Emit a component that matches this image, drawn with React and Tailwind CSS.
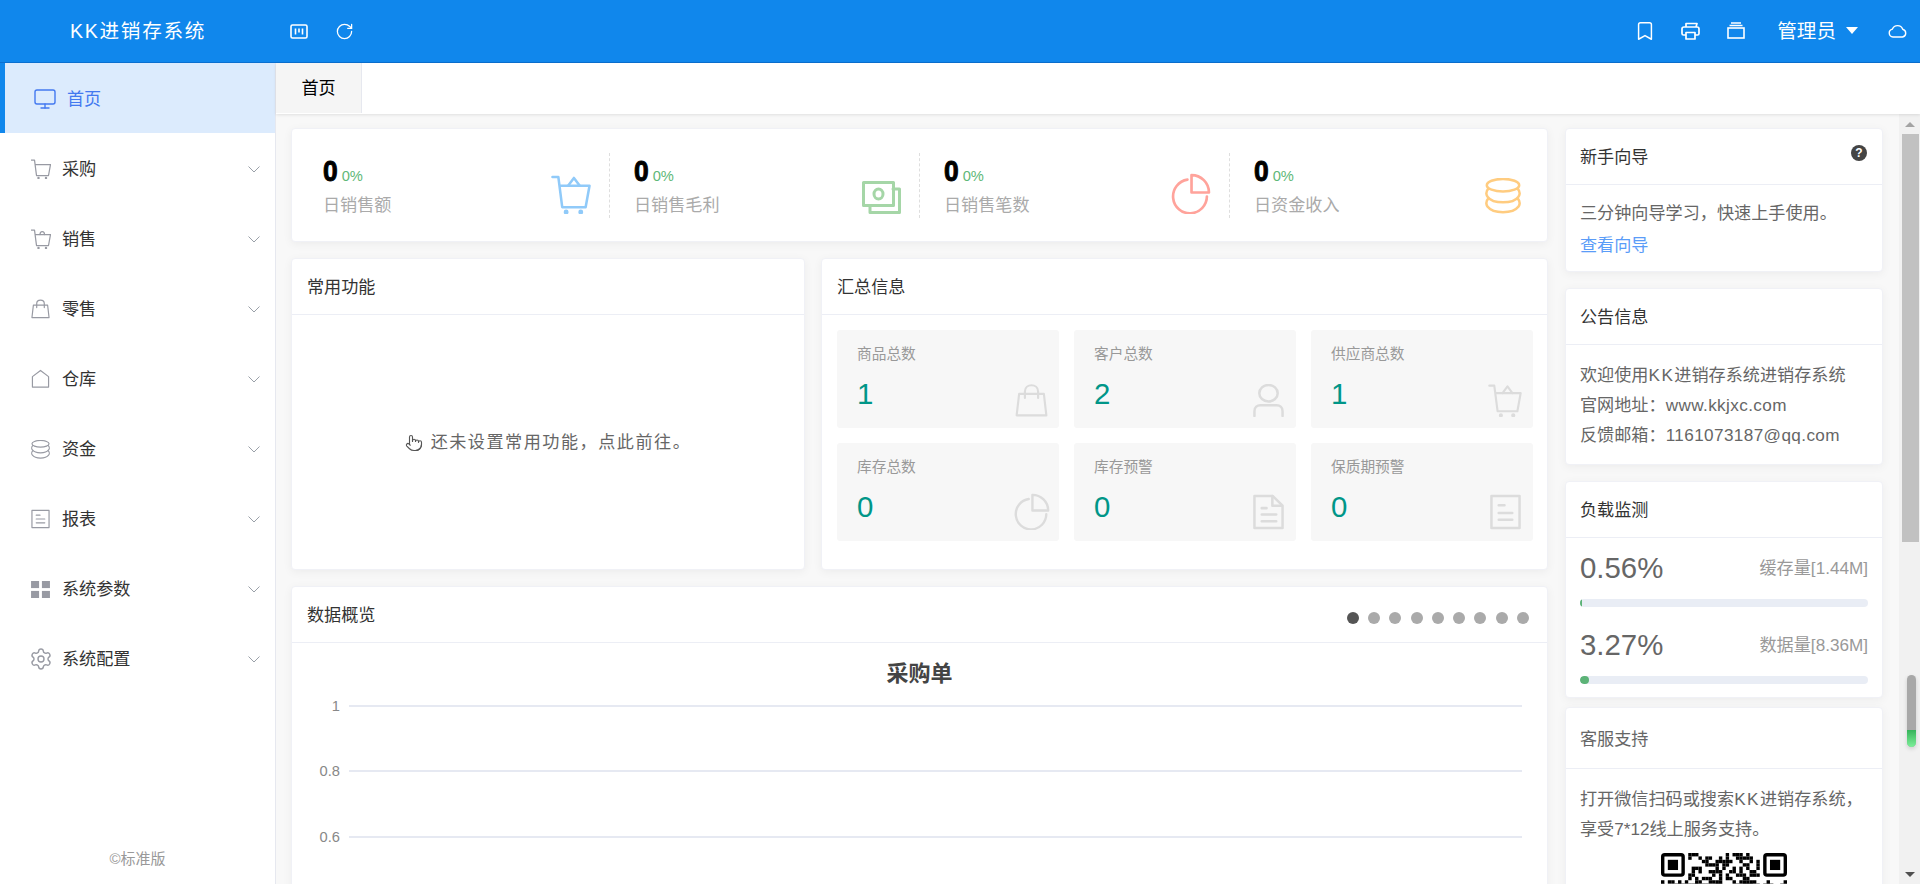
import React from "react";
import { Monitor, Pointer, RotateCw, Bookmark, Settings } from "lucide-react";

const FONT = "[font-family:'Liberation_Sans','Noto_Sans_CJK_SC',sans-serif]";

const S = ({ w = 20, h = 20, vb = "0 0 40 40", sw = 2.5, className = "", children }) => (
  <svg width={w} height={h} viewBox={vb} fill="none" stroke="currentColor" strokeWidth={sw} strokeLinecap="round" strokeLinejoin="round" className={className}>
    {children}
  </svg>
);

const CartIcon = (p) => (
  <S {...p}>
    <path d="M1 2h6l4 31h24l4-22H9" />
    <path d="M17 11l6-8 6 8" />
    <circle cx="15" cy="38" r="1.2" fill="currentColor" />
    <circle cx="30" cy="38" r="1.2" fill="currentColor" />
  </S>
);
const CartArcIcon = (p) => (
  <S {...p}>
    <path d="M1 2h6l4 31h24l4-22H9" />
    <path d="M18 11c0-8 9-8 9 0" />
    <circle cx="15" cy="38" r="1.2" fill="currentColor" />
    <circle cx="30" cy="38" r="1.2" fill="currentColor" />
  </S>
);
const CartPlainIcon = (p) => (
  <S {...p}>
    <path d="M1 2h6l4 31h24l4-22H9" />
    <circle cx="15" cy="38" r="1.2" fill="currentColor" />
    <circle cx="30" cy="38" r="1.2" fill="currentColor" />
  </S>
);
const BagIcon = (p) => (
  <S {...p}>
    <path d="M5 12h30l3 26H2z" />
    <path d="M12 17V9c0-10 16-10 16 0v8" />
  </S>
);
const HouseIcon = (p) => (
  <S {...p}>
    <path d="M3 37V15L20 2l17 13v22z" />
  </S>
);
const CoinsIcon = (p) => (
  <S {...p}>
    <ellipse cx="20" cy="8" rx="18" ry="7" />
    <path d="M3.500 12C0 16 2 20 3 21c3 4 9 6 17 6s14-2 17-6c1-1 3-5-.5-9" />
    <path d="M3.500 23C0 27 2 31 3 32c3 4 9 6 17 6s14-2 17-6c1-1 3-5-.5-9" />
  </S>
);
const ReportIcon = (p) => (
  <S {...p}>
    <rect x="2" y="2" width="36" height="36" />
    <path d="M11 12h8M11 20h18M11 28h18" />
  </S>
);
const GridIcon = ({ w = 19, h = 17, className = "" }) => (
  <svg width={w} height={h} viewBox="0 0 20 18" fill="currentColor" className={className}>
    <rect width="8.5" height="7.5" />
    <rect x="11.5" width="8.5" height="7.5" />
    <rect y="10.5" width="8.5" height="7.5" />
    <rect x="11.5" y="10.5" width="8.5" height="7.5" />
  </svg>
);
const Chevron = () => (
  <svg width="12" height="7" viewBox="0 0 12 7" fill="none" stroke="#9aa0a8" strokeWidth="1">
    <path d="M.5.5 6 6l5.500-5.500" />
  </svg>
);
const MoneyIcon = () => (
  <S w={39} h={33} vb="0 0 39 33" sw={3}>
    <rect x="1.500" y="1.500" width="30" height="23" />
    <path d="M31 8h6.500v23.500H8v-7" />
    <ellipse cx="16.500" cy="13" rx="4.500" ry="5" />
  </S>
);
const PieIcon = (p) => (
  <S {...p} vb="0 0 40 40" sw={2.6}>
    <path d="M17 6.500A16.500 16.500 0 1 0 36 23" />
    <path d="M21 2a17 17 0 0 1 17 17H21z" />
  </S>
);
const PersonIcon = (p) => (
  <S {...p} vb="0 0 32 34" sw={2.6}>
    <ellipse cx="16" cy="9.500" rx="9.500" ry="8.500" />
    <path d="M1.500 33v-5c0-4 3-6 6-6h17c3 0 6 2 6 6v5" />
  </S>
);
const DocFoldIcon = (p) => (
  <S {...p} vb="0 0 32 36" sw={2.6}>
    <path d="M1.500 1.500h19l10 10v23h-29z" />
    <path d="M20 1.500v10h10" />
    <path d="M9 14h5M9 20.500h15M9 27.500h15" />
  </S>
);
const DocIcon = (p) => (
  <S {...p} vb="0 0 32 36" sw={2.6}>
    <rect x="1.500" y="1.500" width="29" height="33" />
    <path d="M9 11h6M9 19h14M9 26h14" />
  </S>
);
const BoardIcon = () => (
  <svg width="18" height="15" viewBox="0 0 18 15" fill="none" stroke="#fff" strokeWidth="1.600">
    <rect x="1" y="1" width="16" height="13" rx="1.500" />
    <path d="M5.500 4.500v6M9 4.500v4M12.500 4.500v6" />
  </svg>
);
const PrinterIcon = () => (
  <svg width="19" height="18" viewBox="0 0 19 18" fill="none" stroke="#fff" strokeWidth="1.700" strokeLinejoin="round">
    <path d="M5 5V1.500h11l-1 3.500" />
    <path d="M5 13H2.500A1.500 1.500 0 0 1 1 11.500V7a2 2 0 0 1 2-2h13a2 2 0 0 1 2 2v4.500A1.500 1.500 0 0 1 16.500 13H14" />
    <path d="M5 10.500h9v6.500H5z" />
  </svg>
);
const StackIcon = () => (
  <svg width="18" height="17" viewBox="0 0 18 17" fill="none" stroke="#fff" strokeWidth="1.600">
    <rect x="1" y="6" width="16" height="10" />
    <path d="M2.500 3.500h13M4 1h10" />
  </svg>
);
const CloudIcon = () => (
  <svg width="19" height="14" viewBox="0 0 19 14" fill="none" stroke="#fff" strokeWidth="1.400">
    <path d="M5 13a4 4 0 0 1-.6-7.900A5.500 5.500 0 0 1 14.700 5.200 4 4 0 0 1 14.500 13z" />
  </svg>
);

const menu = [
  ["采购", <CartPlainIcon w={20} h={20} />],
  ["销售", <CartArcIcon w={20} h={20} />],
  ["零售", <BagIcon w={19} h={20} />],
  ["仓库", <HouseIcon w={19} h={20} />],
  ["资金", <CoinsIcon w={19} h={19} />],
  ["报表", <ReportIcon w={19} h={20} />],
  ["系统参数", <GridIcon />],
  ["系统配置", <Settings size={24} strokeWidth={1.400} className="-ml-[2px]" />],
];

const Sidebar = () => (
  <aside className="w-[276px] shrink-0 bg-white border-r border-[#e6e8ef] flex flex-col">
    <div className="h-[70px] bg-[#dcebfd] border-l-[5px] border-[#1087ec] flex items-center pl-[28px] pt-[2px] text-[#4379f0]">
      <Monitor size={24} strokeWidth={1.400} className="mr-[10px]" />
      <span className="text-[17.14px] pt-[2px]">首页</span>
    </div>
    {menu.map(([name, icon]) => (
      <div key={name} className="h-[70px] flex items-center pl-[31px] pr-[15px] pt-[2px] text-[#333]">
        <span className="w-[31px] text-[#989aa3] flex items-center">{icon}</span>
        <span className="text-[17.14px] flex-1 pt-[2px]">{name}</span>
        <Chevron />
      </div>
    ))}
    <div className="mt-auto pb-[14px] text-center text-[15px] text-[#999]">©标准版</div>
  </aside>
);

const Card = ({ title, titleClass = "text-[#333]", headH = "h-[56px]", headPx = "px-[15px]", right, className = "", children }) => (
  <section className={`bg-white rounded-[4px] border border-[#f0f1f6] shadow-[0_2px_10px_rgba(0,0,0,0.05)] ${className}`}>
    <header className={`${headH} ${headPx} flex items-center justify-between border-b border-[#eceef5]`}>
      <span className={`text-[17.14px] pt-[3px] ${titleClass}`}>{title}</span>
      {right}
    </header>
    {children}
  </section>
);

const stats = [
  ["日销售额", <CartIcon w={40} h={39} sw={2.600} />, "text-[#90caf9]"],
  ["日销售毛利", <MoneyIcon />, "text-[#a5d6a7]"],
  ["日销售笔数", <PieIcon w={41} h={41} />, "text-[#ffa39b]"],
  ["日资金收入", <CoinsIcon w={36} h={36} sw={2.800} />, "text-[#ffcc80]"],
];

const StatsCard = () => (
  <section className="h-[114px] bg-white rounded-[4px] border border-[#f0f1f6] shadow-[0_2px_10px_rgba(0,0,0,0.05)] flex items-center px-[7px]">
    {stats.map(([label, icon, color], i) => (
      <div key={label} className={`w-[310px] h-[65px] pl-[24px] flex justify-between ${i ? "border-l border-dashed border-[#dedede]" : ""}`}>
        <div className="pt-[2px]">
          <div className="flex items-baseline h-[32px]">
            <span className="text-[30px] leading-[32px] font-bold text-black scale-x-[0.88] origin-left [-webkit-text-stroke:1px_#000]">0</span>
            <span className="text-[14.7px] text-[#5fb878] ml-[2px]">0%</span>
          </div>
          <div className="text-[17.14px] text-[#aaa] mt-[6px]">{label}</div>
        </div>
        <div className={`mr-[18px] self-end -mb-[-4px] ${color}`}>{icon}</div>
      </div>
    ))}
  </section>
);

const tiles = [
  ["商品总数", "1", <BagIcon w={33} h={33} sw={2.600} />, "pr-[11px]"],
  ["客户总数", "2", <PersonIcon w={31} h={33} />, "pr-[12px]"],
  ["供应商总数", "1", <CartIcon w={36} h={33} sw={2.600} />, "pr-[10px]"],
  ["库存总数", "0", <PieIcon w={37} h={37} />, "pr-[9px]"],
  ["库存预警", "0", <DocFoldIcon w={31} h={36} />, "pr-[12px]"],
  ["保质期预警", "0", <DocIcon w={31} h={36} />, "pr-[12px]"],
];

const Tile = ({ label, value, icon, pr }) => (
  <div className={`h-[98px] bg-[#f7f7f7] rounded-[3px] pl-[20px] pt-[13px] pb-[11px] flex flex-col ${pr}`}>
    <div className="text-[14.7px] text-[#999]">{label}</div>
    <div className="flex justify-between items-end mt-auto">
      <span className="text-[29.4px] leading-[38px] mb-[4px] text-[#009688]">{value}</span>
      <span className="text-[#dcdcdc] flex">{icon}</span>
    </div>
  </div>
);

const QR_N = 37;
const qrCells = (() => {
  const cells = [];
  let seed = 73;
  for (let y = 0; y < QR_N; y++) {
    for (let x = 0; x < QR_N; x++) {
      seed = (seed * 1103515245 + 12345) & 0x7fffffff;
      const inF = (x < 8 && y < 8) || (x > QR_N - 9 && y < 8) || (x < 8 && y > QR_N - 9);
      if (!inF && (seed >> 16) % 2 === 0) cells.push([x, y]);
    }
  }
  return cells;
})();
const Finder = ({ x, y }) => (
  <g>
    <rect x={x + 0.5} y={y + 0.5} width="6" height="6" rx="0.6" fill="none" stroke="#000" strokeWidth="1" />
    <rect x={x + 2} y={y + 2} width="3" height="3" fill="#000" />
  </g>
);
const QR = () => (
  <svg width="126" height="126" viewBox={`0 0 ${QR_N} ${QR_N}`} className="mx-auto">
    {qrCells.map(([x, y]) => (
      <rect key={`${x}-${y}`} x={x} y={y} width="1" height="1" fill="#000" />
    ))}
    <Finder x={0} y={0} />
    <Finder x={QR_N - 7} y={0} />
    <Finder x={0} y={QR_N - 7} />
  </svg>
);

const Meter = ({ pct, label }) => (
  <div>
    <div className="flex items-center justify-between h-[36px]">
      <span className="text-[29.4px] text-[#666]">{pct}%</span>
      <span className="text-[17.14px] text-[#999] pt-[1px]">{label}</span>
    </div>
    <div className="h-[8px] mt-[13px] rounded-full bg-[#e9edf5] overflow-hidden">
      <div className="h-full rounded-full bg-[#5cb377]" style={{ width: `${pct}%` }} />
    </div>
  </div>
);

const RightColumn = () => (
  <div className="w-[318px] shrink-0 flex flex-col">
    <Card
      title="新手向导"
      headPx="px-[14px]"
      right={
        <span className="w-[16px] h-[16px] -mt-[8px] rounded-full bg-[#444] text-white text-[12px] font-bold leading-[16px] text-center mr-[1px]">?</span>
      }
    >
      <div className="h-[86px] px-[14px] pt-[12px] text-[17.14px] leading-[32px] text-[#666]">
        <p>三分钟向导学习，快速上手使用。</p>
        <a className="text-[#5a9cf8]">查看向导</a>
      </div>
    </Card>
    <Card title="公告信息" headPx="px-[14px]" className="mt-[16px]">
      <div className="h-[119px] px-[14px] pt-[15px] text-[17.14px] leading-[30px] text-[#666]">
        <p>欢迎使用<span className="tracking-[1.500px]">KK</span>进销存系统进销存系统</p>
        <p>官网地址：<span className="tracking-[0.4px]">www.kkjxc.com</span></p>
        <p>反馈邮箱：<span className="tracking-[0.4px]">1161073187@qq.com</span></p>
      </div>
    </Card>
    <Card title="负载监测" headPx="px-[14px]" className="mt-[16px]">
      <div className="h-[159px] px-[14px] pt-[12px] flex flex-col gap-[20px]">
        <Meter pct={0.56} label="缓存量[1.44M]" />
        <Meter pct={3.27} label="数据量[8.36M]" />
      </div>
    </Card>
    <Card title="客服支持" titleClass="text-[#666]" headH="h-[61px]" headPx="px-[14px]" className="mt-[9px]">
      <div className="px-[14px] pt-[15px] pb-[15px] text-[17.14px] leading-[30px] text-[#666]">
        <p>打开微信扫码或搜索<span className="tracking-[1.500px]">KK</span>进销存系统，</p>
        <p>享受7*12线上服务支持。</p>
        <div className="mt-[9px]">
          <QR />
        </div>
      </div>
    </Card>
  </div>
);

const Chart = () => (
  <div className="px-[15px] pt-[16px]">
    <div className="text-center text-[22px] leading-[30px] font-bold text-[#444]">采购单</div>
    <div className="-mt-[16px] pb-[100px]">
      {["1", "0.8", "0.6"].map((v) => (
        <div key={v} className="h-[65.500px] flex items-center">
          <span className="w-[33px] text-right text-[14.7px] text-[#888]">{v}</span>
          <span className="ml-[9px] flex-1 h-[2px] bg-[#e6e9f2] mr-[10px]" />
        </div>
      ))}
    </div>
  </div>
);

const Dots = () => (
  <div className="flex gap-[9.300px] mr-[3px] mt-[7px]">
    {[0, 1, 2, 3, 4, 5, 6, 7, 8].map((i) => (
      <span key={i} className={`w-[12px] h-[12px] rounded-full ${i === 0 ? "bg-[#555]" : "bg-[#aaa]"}`} />
    ))}
  </div>
);

const LeftColumn = () => (
  <div className="w-[1257px] shrink-0 flex flex-col gap-[16px]">
    <StatsCard />
    <div className="flex gap-[16px]">
      <Card title="常用功能" className="w-[514px] h-[312px]">
        <div className="h-[254px] flex items-center justify-center pt-[2px] text-[17.14px] tracking-[1.500px] text-[#666]">
          <Pointer size={18} strokeWidth={1.500} className="mr-[8px] text-[#555]" />
          还未设置常用功能，点此前往。
        </div>
      </Card>
      <Card title="汇总信息" className="w-[727px] h-[312px]">
        <div className="px-[15px] pt-[15px] grid grid-cols-[222px_222px_222px] gap-[15px]">
          {tiles.map(([l, v, i, pr]) => (
            <Tile key={l} label={l} value={v} icon={i} pr={pr} />
          ))}
        </div>
      </Card>
    </div>
    <Card title="数据概览" right={<Dots />} className="shrink-0">
      <Chart />
    </Card>
  </div>
);

const Scrollbar = () => (
  <div className="w-[21px] shrink-0 bg-[#f1f1f1] flex flex-col items-center pl-[1px] relative">
    <div className="h-[20px] flex items-center justify-center">
      <span className="w-0 h-0 border-x-[5px] border-x-transparent border-b-[5px] border-b-[#a3a3a3]" />
    </div>
    <div className="w-[17px] h-[408px] bg-[#c1c1c1]" />
    <div className="mt-auto h-[20px] flex items-center justify-center">
      <span className="w-0 h-0 border-x-[5px] border-x-transparent border-t-[5px] border-t-[#505050]" />
    </div>
    <div className="absolute left-[8px] top-[561px] w-[9px] h-[72px] rounded-full bg-[#a8a8a8] overflow-hidden shadow-[0_2px_4px_rgba(0,0,0,0.15)] flex flex-col justify-end">
      <div className="h-[17px] bg-gradient-to-b from-[#35b35a] to-[#7cf09a]" />
    </div>
  </div>
);

export default function App() {
  return (
    <div className={`${FONT} w-[1920px] h-[884px] overflow-hidden flex flex-col bg-white`}>
      <header className="h-[63px] shrink-0 bg-[#1087ec] border-b border-[#0a6fd0] flex items-center text-white">
        <div className="w-[290px] pl-[70px] pt-[2px] text-[19.6px] tracking-[1.700px]">KK进销存系统</div>
        <BoardIcon />
        <RotateCw size={19} strokeWidth={1.600} className="ml-[27px]" />
        <div className="ml-auto flex items-center">
          <Bookmark size={22} strokeWidth={1.600} className="mr-[25px]" />
          <PrinterIcon />
          <span className="ml-[27px] flex"><StackIcon /></span>
          <span className="ml-[32px] pt-[2px] text-[19.6px]">管理员</span>
          <span className="ml-[10px] w-0 h-0 border-x-[6.500px] border-x-transparent border-t-[7px] border-t-white" />
          <span className="ml-[30px] mr-[13px] flex"><CloudIcon /></span>
        </div>
      </header>
      <div className="flex-1 flex min-h-0">
        <Sidebar />
        <main className="flex-1 min-w-0 flex flex-col">
          <div className="h-[51px] shrink-0 bg-white flex shadow-[0_1px_3px_rgba(0,0,0,0.1)] z-10">
            <div className="w-[86px] h-[50px] bg-[#f5f5f5] border-r border-[#e6e8ef] flex items-center justify-center pt-[2px] text-[17.14px] text-black">首页</div>
          </div>
          <div className="flex-1 min-h-0 flex">
            <div className="flex-1 min-w-0 bg-[#f8f8f8] overflow-hidden pl-[15px] pt-[14px] flex gap-[17px] items-start">
              <LeftColumn />
              <RightColumn />
            </div>
            <Scrollbar />
          </div>
        </main>
      </div>
    </div>
  );
}
